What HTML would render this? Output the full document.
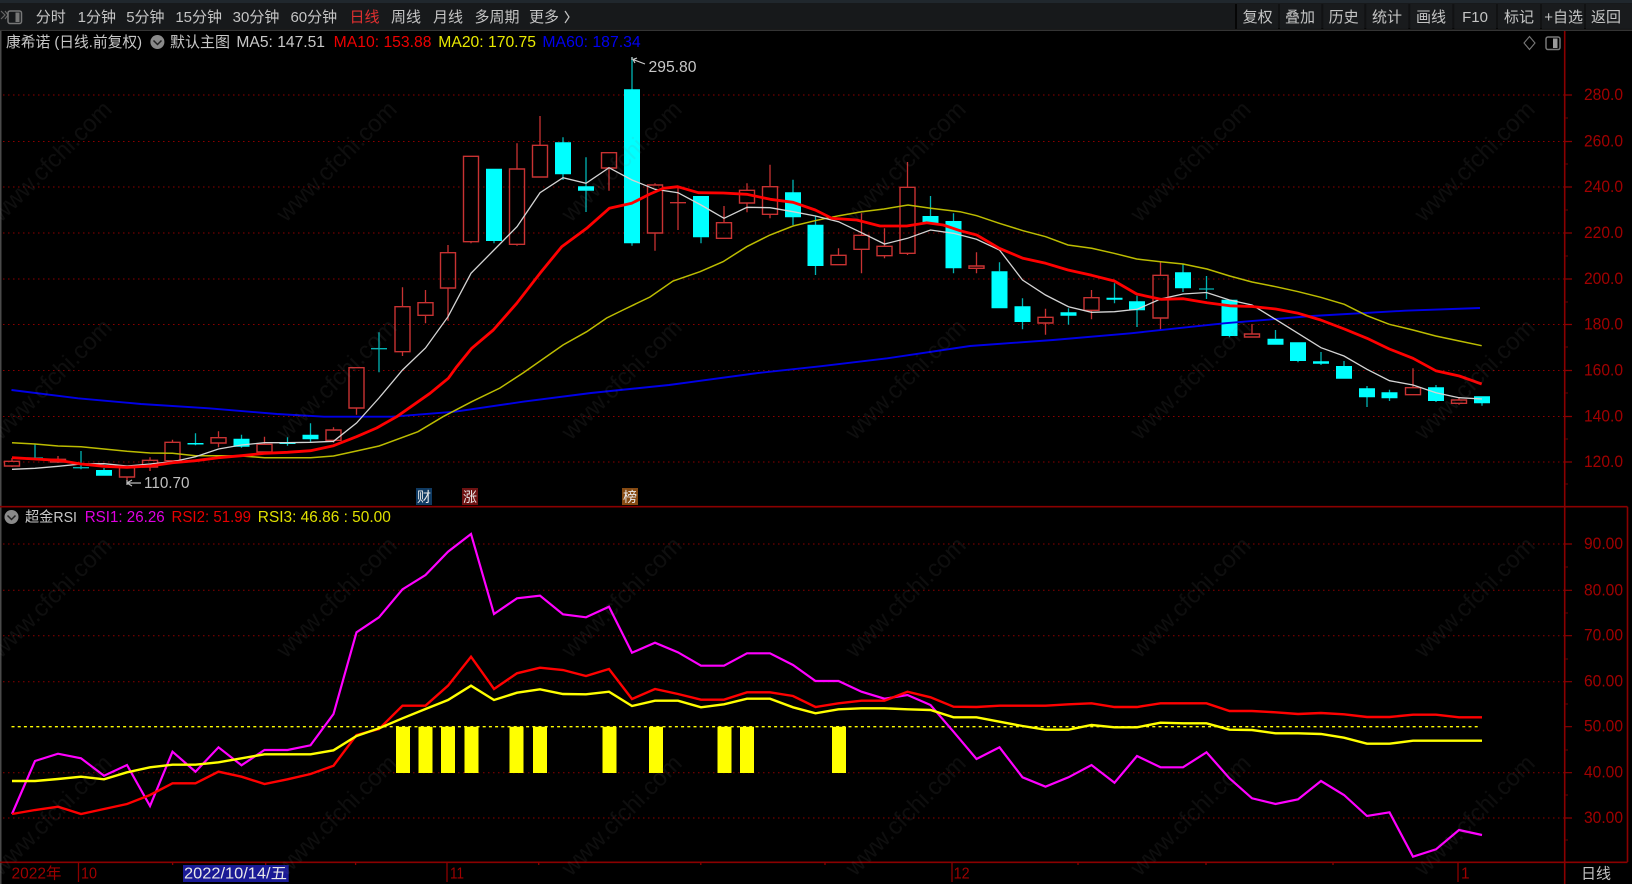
<!DOCTYPE html>
<html lang="zh"><head><meta charset="utf-8"><title>康希诺 日线</title>
<style>
html,body{margin:0;padding:0;background:#000;width:1632px;height:884px;overflow:hidden}
svg{display:block}
text{font-family:"Liberation Sans","Noto Sans CJK SC",sans-serif;font-size:15.5px}
.tb{font-size:15px;fill:#c4c4c4;text-anchor:middle}
.ax{fill:#a00000;font-size:17px}
.wm{font-size:24px;fill:#808080;opacity:.11}
</style></head><body>
<svg width="1632" height="884" viewBox="0 0 1632 884" xmlns="http://www.w3.org/2000/svg">
<rect width="1632" height="884" fill="#000"/>
<!-- toolbar -->
<rect width="1632" height="3" fill="#20272d"/>
<rect y="3" width="1632" height="26" fill="#17191b"/>
<rect y="29.5" width="1632" height="1.5" fill="#343434"/>
<rect x="0" width="1.5" height="884" y="31" fill="#4a4a4a"/>
<path d="M1 11l4 4-4 4M5 11l3 4-3 4" fill="none" stroke="#666" stroke-width="1.2"/>
<rect x="8" y="11" width="13.5" height="12.5" rx="2" fill="none" stroke="#777" stroke-width="1.5"/>
<rect x="15.5" y="12.5" width="4" height="9.5" fill="#777"/>
<text class="tb" x="50.7" y="22">分时</text>
<text class="tb" x="96.8" y="22">1分钟</text>
<text class="tb" x="145.4" y="22">5分钟</text>
<text class="tb" x="198.7" y="22">15分钟</text>
<text class="tb" x="256" y="22">30分钟</text>
<text class="tb" x="313.8" y="22">60分钟</text>
<text class="tb" x="364.5" y="22" style="fill:#e03030">日线</text>
<text class="tb" x="406" y="22">周线</text>
<text class="tb" x="448" y="22">月线</text>
<text class="tb" x="497" y="22">多周期</text>
<text class="tb" x="544" y="22">更多</text>
<path d="M565 11l4 6-4 6" fill="none" stroke="#c4c4c4" stroke-width="1.2"/>
<path d="M1236 4v25M1279 4v25M1322.3 4v25M1365.3 4v25M1409.3 4v25M1453.3 4v25M1497 4v25M1541 4v25M1585 4v25" stroke="#060606" stroke-width="2"/>
<rect x="1237" y="4" width="395" height="24" fill="#1b1d1f" opacity=".5"/>
<text class="tb" x="1257.6" y="22">复权</text>
<text class="tb" x="1300" y="22">叠加</text>
<text class="tb" x="1343.6" y="22">历史</text>
<text class="tb" x="1387" y="22">统计</text>
<text class="tb" x="1431" y="22">画线</text>
<text class="tb" x="1475" y="22">F10</text>
<text class="tb" x="1519" y="22">标记</text>
<text class="tb" x="1563.6" y="22">+自选</text>
<text class="tb" x="1606" y="22">返回</text>
<!-- title -->
<text x="6" y="47" fill="#c8c8c8" style="font-size:15px" textLength="136" lengthAdjust="spacingAndGlyphs">康希诺 (日线.前复权)</text>
<circle cx="157.4" cy="42" r="7" fill="#8a8a8a"/><path d="M153.5 40.5l4 4 4-4" fill="none" stroke="#222" stroke-width="1.5"/>
<text x="170" y="47" fill="#c8c8c8" style="font-size:15px">默认主图</text>
<text x="236.4" y="47" fill="#c8c8c8" textLength="88.6" lengthAdjust="spacingAndGlyphs">MA5: 147.51</text>
<text x="333.7" y="47" fill="#ee0000" textLength="97.8" lengthAdjust="spacingAndGlyphs">MA10: 153.88</text>
<text x="438.3" y="47" fill="#e8e800" textLength="97.7" lengthAdjust="spacingAndGlyphs">MA20: 170.75</text>
<text x="542.4" y="47" fill="#0000f0" textLength="98.3" lengthAdjust="spacingAndGlyphs">MA60: 187.34</text>
<path d="M1529.5 36.5l5.5 6.5-5.5 6.5-5.5-6.5z" fill="none" stroke="#777" stroke-width="1.1"/>
<rect x="1546" y="37" width="14" height="12.5" rx="2" fill="none" stroke="#777" stroke-width="1.5"/>
<rect x="1553" y="38.5" width="4.5" height="9.5" fill="#999"/>
<!-- grid -->
<path d="M3 95H1564M3 141.5H1564M3 187H1564M3 233H1564M3 279H1564M3 324.5H1564M3 370.5H1564M3 416.5H1564M3 462H1564M3 544H1564M3 590.3H1564M3 635.7H1564M3 681.7H1564M3 772.7H1564M3 818H1564" stroke="#8c0000" stroke-width="1" stroke-dasharray="1.5 3.5"/>
<!-- axes -->
<path d="M0 506.7H1627.5M1627.5 506.7V862M0 862.3H1627.5M1564.7 31V884" stroke="#8a0000" stroke-width="1.6" fill="none"/>
<path d="M1565 95h7M1565 141.5h7M1565 187h7M1565 233h7M1565 279h7M1565 324.5h7M1565 370.5h7M1565 416.5h7M1565 462h7M1565 544h7M1565 590.3h7M1565 635.7h7M1565 681.7h7M1565 726.7h7M1565 772.7h7M1565 818h7" stroke="#8a0000" stroke-width="1.2"/>
<path d="M1565 118h3M1565 164h3M1565 210h3M1565 256h3M1565 302h3M1565 347h3M1565 393h3M1565 439h3M1565 484h3M1565 567h3M1565 613h3M1565 659h3M1565 704h3M1565 750h3M1565 795h3M1565 840h3" stroke="#6a0000"/>
<text class="ax" x="1584" y="100" textLength="39" lengthAdjust="spacingAndGlyphs">280.0</text>
<text class="ax" x="1584" y="146.5" textLength="39" lengthAdjust="spacingAndGlyphs">260.0</text>
<text class="ax" x="1584" y="192" textLength="39" lengthAdjust="spacingAndGlyphs">240.0</text>
<text class="ax" x="1584" y="238" textLength="39" lengthAdjust="spacingAndGlyphs">220.0</text>
<text class="ax" x="1584" y="284" textLength="39" lengthAdjust="spacingAndGlyphs">200.0</text>
<text class="ax" x="1584" y="329.5" textLength="39" lengthAdjust="spacingAndGlyphs">180.0</text>
<text class="ax" x="1584" y="375.5" textLength="39" lengthAdjust="spacingAndGlyphs">160.0</text>
<text class="ax" x="1584" y="421.5" textLength="39" lengthAdjust="spacingAndGlyphs">140.0</text>
<text class="ax" x="1584" y="467" textLength="39" lengthAdjust="spacingAndGlyphs">120.0</text>
<text class="ax" x="1584" y="549" textLength="39" lengthAdjust="spacingAndGlyphs">90.00</text>
<text class="ax" x="1584" y="595.3" textLength="39" lengthAdjust="spacingAndGlyphs">80.00</text>
<text class="ax" x="1584" y="640.5" textLength="39" lengthAdjust="spacingAndGlyphs">70.00</text>
<text class="ax" x="1584" y="686.5" textLength="39" lengthAdjust="spacingAndGlyphs">60.00</text>
<text class="ax" x="1584" y="731.5" textLength="39" lengthAdjust="spacingAndGlyphs">50.00</text>
<text class="ax" x="1584" y="777.5" textLength="39" lengthAdjust="spacingAndGlyphs">40.00</text>
<text class="ax" x="1584" y="823" textLength="39" lengthAdjust="spacingAndGlyphs">30.00</text>
<!-- red wicks -->
<path fill="none" stroke="#c83232" stroke-width="1.3" d="M12 458V461.3M12 466V467M58 456V459.3M58 462V463M127 477V480.7M150 457.3V460.3M150 467V471M172.5 439.7V442.3M172.5 460.7V462M218.5 431.3V437.7M218.5 443V447.3M264.5 436.7V444.3M333.5 427.3V430M333.5 440.3V442.7M356.5 408V414.7M402.5 287.3V306.7M402.5 351.7V356M425.5 290V302.7M425.5 315.3V323.3M448 245V252.7M448 288V320.7M471 241.7V243.3M517 143.3V169M517 244.3V245.7M540 116V145.3M609 168V190.7M655 183.3V185M655 233V250.7M678 188V230M670 202.7H686M724 206V222.7M747 183.3V190.3M747 203V212.3M770 164.7V186.7M770 214.3V218.3M838.5 248.3V255.3M861.5 213.3V235.3M861.5 249.3V273.3M884.5 228.3V246.3M884.5 255.7V258.3M907.5 162V187.3M907.5 253.3V255M976.5 252.3V266M976.5 268.3V273.3M1045.5 308.7V317.3M1045.5 323V334.7M1091.5 290V297.7M1091.5 310.3V319.3M1160.5 261.7V275.3M1160.5 318V330M1252 324V334M1413 368.3V387.7M1459 398V400M1459 403.3V404.7"/>
<!-- red bodies -->
<path fill="none" stroke="#c83232" stroke-width="1.4" d="M4.5 461.3H19.5V466H4.5ZM50.5 459.3H65.5V462H50.5ZM119.5 467.7H134.5V477H119.5ZM142.5 460.3H157.5V467H142.5ZM165 442.3H180V460.7H165ZM211 437.7H226V443H211ZM257 444.3H272V452H257ZM326 430H341V440.3H326ZM349 367.7H364V408H349ZM395 306.7H410V351.7H395ZM418 302.7H433V315.3H418ZM440.5 252.7H455.5V288H440.5ZM463.5 156.3H478.5V241.7H463.5ZM509.5 169H524.5V244.3H509.5ZM532.5 145.3H547.5V177H532.5ZM601.5 152.7H616.5V168H601.5ZM647.5 185H662.5V233H647.5ZM716.5 222.7H731.5V238.3H716.5ZM739.5 190.3H754.5V203H739.5ZM762.5 186.7H777.5V214.3H762.5ZM831 255.3H846V264.7H831ZM854 235.3H869V249.3H854ZM877 246.3H892V255.7H877ZM900 187.3H915V253.3H900ZM969 266H984V268.3H969ZM1038 317.3H1053V323H1038ZM1084 297.7H1099V310.3H1084ZM1153 275.3H1168V318H1153ZM1244.5 334H1259.5V337H1244.5ZM1405.5 387.7H1420.5V394.7H1405.5ZM1451.5 400H1466.5V403.3H1451.5Z"/>
<!-- cyan wicks -->
<path fill="none" stroke="#00b4b4" stroke-width="1.3" d="M35 444V459M27 458H43M81 451V469.3M73 467.7H89M104 468V470M195.5 433.3V445.3M241.5 434.7V447.7M287.5 437.3V445.7M310.5 423.3V442.7M379 332.3V372.3M371 348.7H387M494 241V243.3M563 137.3V180M586 157.3V212M632 57.3V245.7M701 237.3V243.3M793 179.7V225M815.5 216V275M930.5 196V216M953.5 213.3V273.3M999.5 262.3V271.3M1022.5 298.3V329.3M1068.5 308.3V324.7M1114.5 283.3V303.3M1137 295.7V327M1183 264.3V292M1206.5 276V299M1199 289H1214M1229.5 336V337.3M1275.5 330V338.7M1298 361V362.3M1321 352V365M1344 361V366M1367 386V407M1389.5 389.7V401M1436 385V402M1482 403V405.7"/>
<!-- cyan bodies -->
<path fill="#00ffff" d="M96 470H112V475.7H96ZM187.5 443H203.5V444.5H187.5ZM233.5 438.7H249.5V446.7H233.5ZM279.5 442H295.5V444H279.5ZM302.5 434.7H318.5V439.3H302.5ZM486 168.7H502V241H486ZM555 142.3H571V174.3H555ZM578 186.3H594V190.7H578ZM624 89.3H640V243.3H624ZM693 196H709V237.3H693ZM785 192.3H801V217.3H785ZM807.5 224.7H823.5V266H807.5ZM922.5 216H938.5V223.3H922.5ZM945.5 221H961.5V268.3H945.5ZM991.5 271.3H1007.5V308.3H991.5ZM1014.5 306.3H1030.5V322H1014.5ZM1060.5 312.3H1076.5V315.7H1060.5ZM1106.5 297.7H1122.5V299.7H1106.5ZM1129 301.3H1145V310.3H1129ZM1175 272.3H1191V288.3H1175ZM1221.5 299.7H1237.5V336H1221.5ZM1267.5 338.7H1283.5V344.7H1267.5ZM1290 342.3H1306V361H1290ZM1313 361.3H1329V363.7H1313ZM1336 366H1352V378.7H1336ZM1359 388.3H1375V397.3H1359ZM1381.5 392.3H1397.5V398.3H1381.5ZM1428 387.3H1444V401H1428ZM1474 396.3H1490V403.3H1474Z"/>
<!-- MA60 -->
<polyline fill="none" stroke="#0000e6" stroke-width="1.9" points="11.5,390 78,398.3 141,404 209,408.3 277,414 324,416.7 392,416.7 455,411.7 523,401.7 591,393 669,385 758,373 820,366.3 887.3,358.3 970,346 1053,340 1130.7,333.3 1224,323.3 1312,316 1405,310.7 1480,308"/>
<!-- MA20 -->
<polyline fill="none" stroke="#bcbc00" stroke-width="1.5" points="12,442.7 35,444 58,446 81,446.7 104,449 127,451.3 150,453 172.5,453.3 195.5,455.7 218.5,455.7 241.5,456 264.5,457.7 287.5,457.7 310.5,457.7 333.5,456 356.5,451 379,446 418,431.7 443,416.7 471.7,401.7 500,388 523,373 563,345 586.7,331.7 606.7,318 623,310 650,297 673,281 700,271.7 723,261.7 746.7,246.7 770,235 793,226 815,220.7 839,215.7 861.7,211.7 884,209 908,205 930.7,208.3 960,211.7 976.7,215.7 999.3,223.3 1023,230.7 1045.7,236.7 1068,245 1091.7,248.3 1114,253.3 1136.7,259 1160.7,261.7 1183,264 1207,269 1229.7,276 1252,282 1275.7,286.7 1298.3,291.7 1320.7,297.3 1344.3,304.3 1367,315.7 1389.3,324.3 1413,330 1435.7,336 1459.3,341 1481.7,345.7"/>
<!-- MA5 -->
<polyline fill="none" stroke="#d4d4d4" stroke-width="1.3" points="12,469.3 35,468.3 58,466.3 81,464 104,463.7 127,466 150,464 172.5,461.7 195.5,456.7 218.5,449 241.5,445 264.5,442.7 287.5,442.7 310.5,442.3 333.5,441.3 356.5,423 379,398 402.5,370 425.5,348 448,316.7 471,273.3 494,250 517,226.7 540,192.7 563,177.7 586,183.3 609,167.7 632,180 655,189.3 678,192.7 701,205 724,218.3 747,207.3 770,207.7 793,211.7 815.5,216 838.5,221.7 861.5,232.7 884.5,244 907.5,238.3 930.5,230 953.5,233.3 976.5,239.3 999.5,250 1022.5,280 1045.5,295 1068.5,306.7 1091.5,312.3 1114.5,311.7 1137,309.3 1160.5,299 1183,294 1206.5,292.5 1229.5,300 1252,305 1275.5,319.3 1298,333.3 1321,347.7 1344,356 1367,369.3 1389.5,380.7 1413,385 1436,392.7 1459,397.7 1482,399"/>
<!-- MA10 -->
<polyline fill="none" stroke="#ff0000" stroke-width="2.8" stroke-linejoin="round" points="12,457.7 35,459 58,460.3 81,464 104,466.3 127,467.3 150,466 172.5,462.7 195.5,460.7 218.5,457.7 241.5,455.7 264.5,453.3 287.5,452.3 310.5,450.7 333.5,445.7 356.5,436.7 376.6,428 396.7,416.7 430,393.3 448.3,378.3 456.7,366.7 471.7,348.3 493.3,330 516.7,303.3 540,273.3 561.7,246.7 586.7,228.3 609.3,208.3 631.7,203.3 650,194 663.3,188.3 677.7,186.7 698.3,192.7 723.3,193 746.7,194.3 770.3,199.3 793,202.3 815.3,210 831.7,218.3 856.7,220 880,226 906.7,226 926.7,222.7 943.3,225 960,230.7 976.7,235 999.3,248.3 1023,258.3 1045.7,263.3 1068,270 1091.7,275.3 1114.3,281 1136.7,294 1160.7,299.3 1183.3,298.7 1207,302.7 1229.7,305.8 1252,306.5 1275.7,309 1298.3,313.3 1320.7,320 1344.3,329 1367,338.3 1389.3,349 1413,358.3 1435.7,370.7 1459.3,376 1481.7,384"/>
<!-- price labels -->
<path d="M645 64L633 59.5M633 59.5l4-1.5M633 59.5l2 3.5M632 57v3" fill="none" stroke="#ccc" stroke-width="1.2"/>
<text x="648.5" y="72" fill="#c8c8c8" textLength="48" lengthAdjust="spacingAndGlyphs">295.80</text>
<path d="M141 483H127M127 483l5-3M127 483l5 3M127 480v5" fill="none" stroke="#bbb" stroke-width="1.2"/>
<text x="144" y="488" fill="#c0c0c0" textLength="45.5" lengthAdjust="spacingAndGlyphs">110.70</text>
<!-- badges -->
<rect x="416" y="488" width="16" height="17" fill="#0f3a62"/><text x="417" y="502" fill="#e8e8e8" style="font-size:14px">财</text>
<rect x="462" y="488" width="16" height="17" fill="#6e1212"/><text x="463" y="502" fill="#e8e8e8" style="font-size:14px">涨</text>
<rect x="622" y="488" width="16" height="17" fill="#864a12"/><text x="623" y="502" fill="#e8e8e8" style="font-size:14px">榜</text>
<!-- RSI title -->
<circle cx="11.5" cy="517" r="7" fill="#8a8a8a"/><path d="M7.5 515.5l4 4 4-4" fill="none" stroke="#222" stroke-width="1.5"/>
<text x="25" y="522" fill="#c8c8c8" style="font-size:14.5px" textLength="52" lengthAdjust="spacingAndGlyphs">超金RSI</text>
<text x="84.7" y="522" fill="#e000e0" textLength="80" lengthAdjust="spacingAndGlyphs">RSI1: 26.26</text>
<text x="171.5" y="522" fill="#e80000" textLength="79.5" lengthAdjust="spacingAndGlyphs">RSI2: 51.99</text>
<text x="257.8" y="522" fill="#e0e000" textLength="133" lengthAdjust="spacingAndGlyphs">RSI3: 46.86 : 50.00</text>
<!-- RSI bars -->
<path fill="#ffff00" d="M396 726.7h14V773h-14zM418.5 726.7h14V773h-14zM441 726.7h14V773h-14zM464.5 726.7h14V773h-14zM509.5 726.7h14V773h-14zM533 726.7h14V773h-14zM602.5 726.7h14V773h-14zM649 726.7h14V773h-14zM717.5 726.7h14V773h-14zM740 726.7h14V773h-14zM832 726.7h14V773h-14z"/>
<path d="M11.5 726.7H1478" stroke="#ffff00" stroke-width="1.3" stroke-dasharray="3 3.2"/>
<!-- RSI lines -->
<polyline fill="none" stroke="#ff00ff" stroke-width="2.2" points="12,814 35,761 58,753.7 81,758.3 104,775.7 127,765 150,806 172.5,751.7 195.5,771.7 218.5,747.3 241.5,765.3 264.5,750 287.5,750 310.5,745.3 333.5,714 356.5,632.3 379,617.3 402.5,589.3 425.5,575 448,551.7 471,534 494,614 517,598.3 540,595.7 563,614.3 586,617.3 609,606.7 632,652.7 655,642.7 678,652.3 701,665.7 724,665.7 747,653.3 770,653.3 793,665 815.5,681 838.5,681 861.5,691.7 884.5,698.7 907.5,695 930.5,705 953.5,731.7 976.5,759 999.5,747.3 1022.5,777.3 1045.5,786.7 1068.5,777.3 1091.5,765 1114.5,782.7 1137,756 1160.5,767.3 1183,767.3 1206.5,752.3 1229.5,778.3 1252,798.3 1275.5,804 1298,799.3 1321,781 1344,795 1367,816 1389.5,812.3 1413,856.7 1436,849.3 1459,830 1482,835"/>
<polyline fill="none" stroke="#ff0000" stroke-width="2.4" points="12,814 35,810 58,806.7 81,814 104,809 127,804 150,795 172.5,783.3 195.5,783.3 218.5,771.7 241.5,776.7 264.5,784 287.5,779.3 310.5,774 333.5,765.7 356.5,735 379,729 402.5,705.7 425.5,705.7 448,685.7 471,656.7 494,689 517,673.3 540,667.7 563,670 586,676 609,669 632,699 655,689 678,694 701,699.7 724,699.7 747,692.3 770,692.3 793,696 815.5,707 838.5,703.3 861.5,700.7 884.5,700.7 907.5,691.7 930.5,697.3 953.5,706.7 976.5,707 999.5,705.7 1022.5,705.7 1045.5,705.7 1068.5,704.3 1091.5,703.3 1114.5,707 1137,707 1160.5,703.3 1183,703.3 1206.5,703.3 1229.5,711 1252,711 1275.5,712.3 1298,714 1321,713 1344,714.3 1367,717 1389.5,717 1413,714.7 1436,714.7 1459,717.3 1482,717.3"/>
<polyline fill="none" stroke="#ffff00" stroke-width="2.4" points="12,781 35,781 58,779 81,776.7 104,779.3 127,772.3 150,767.3 172.5,764.7 195.5,764.7 218.5,762.3 241.5,758.3 264.5,754.3 287.5,754.3 310.5,754.3 333.5,750.3 356.5,736 379,728.3 402.5,718.3 425.5,709 448,700 471,685.7 494,700 517,692.7 540,689.3 563,694 586,694.3 609,691.7 632,706 655,700.7 678,700.7 701,707.3 724,704.3 747,698.7 770,698.7 793,707.3 815.5,713.3 838.5,709.3 861.5,708.3 884.5,708.3 907.5,709.3 930.5,710 953.5,717.3 976.5,717.3 999.5,721.7 1022.5,726 1045.5,729.7 1068.5,729.7 1091.5,725 1114.5,727.3 1137,727.3 1160.5,722.7 1183,723.3 1206.5,723.3 1229.5,729.7 1252,730 1275.5,733.3 1298,733.3 1321,734 1344,737.7 1367,743.7 1389.5,743.7 1413,740.7 1436,740.7 1459,740.7 1482,740.7"/>
<!-- bottom axis -->
<path d="M78.5 862v20M447 862v20M952 862v20M1458 862v20" stroke="#8a0000" stroke-width="1.3"/>
<path d="M172.6 862v3M265.7 862v3M355.6 862v3M538.7 862v3M700.8 862v3M825 862v3M1078 862v3M1206 862v3M1333 862v3" stroke="#8a0000" stroke-width="1.3"/>
<text x="11.5" y="878.5" fill="#a00000" style="font-size:15.5px">2022年</text>
<text x="81" y="878.5" fill="#a00000" textLength="16" lengthAdjust="spacingAndGlyphs">10</text>
<rect x="183" y="865" width="105.7" height="17" fill="#1a1a96"/>
<text x="184" y="878.5" fill="#e8e8e8" style="font-size:15.5px" textLength="103" lengthAdjust="spacingAndGlyphs">2022/10/14/五</text>
<text x="450" y="878.5" fill="#a00000" textLength="14" lengthAdjust="spacingAndGlyphs">11</text>
<text x="953.6" y="878.5" fill="#a00000" textLength="16" lengthAdjust="spacingAndGlyphs">12</text>
<text x="1461" y="878.5" fill="#a00000">1</text>
<text x="1581" y="878.5" fill="#c0c0c0" style="font-size:15px">日线</text>
<!-- watermark -->
<g>
<text class="wm" transform="translate(1 223) rotate(-45)">www.cfchi.com</text>
<text class="wm" transform="translate(286 223) rotate(-45)">www.cfchi.com</text>
<text class="wm" transform="translate(571 223) rotate(-45)">www.cfchi.com</text>
<text class="wm" transform="translate(855 223) rotate(-45)">www.cfchi.com</text>
<text class="wm" transform="translate(1140 223) rotate(-45)">www.cfchi.com</text>
<text class="wm" transform="translate(1424 223) rotate(-45)">www.cfchi.com</text>
<text class="wm" transform="translate(1 441) rotate(-45)">www.cfchi.com</text>
<text class="wm" transform="translate(286 441) rotate(-45)">www.cfchi.com</text>
<text class="wm" transform="translate(571 441) rotate(-45)">www.cfchi.com</text>
<text class="wm" transform="translate(855 441) rotate(-45)">www.cfchi.com</text>
<text class="wm" transform="translate(1140 441) rotate(-45)">www.cfchi.com</text>
<text class="wm" transform="translate(1424 441) rotate(-45)">www.cfchi.com</text>
<text class="wm" transform="translate(1 659) rotate(-45)">www.cfchi.com</text>
<text class="wm" transform="translate(286 659) rotate(-45)">www.cfchi.com</text>
<text class="wm" transform="translate(571 659) rotate(-45)">www.cfchi.com</text>
<text class="wm" transform="translate(855 659) rotate(-45)">www.cfchi.com</text>
<text class="wm" transform="translate(1140 659) rotate(-45)">www.cfchi.com</text>
<text class="wm" transform="translate(1424 659) rotate(-45)">www.cfchi.com</text>
<text class="wm" transform="translate(1 877) rotate(-45)">www.cfchi.com</text>
<text class="wm" transform="translate(286 877) rotate(-45)">www.cfchi.com</text>
<text class="wm" transform="translate(571 877) rotate(-45)">www.cfchi.com</text>
<text class="wm" transform="translate(855 877) rotate(-45)">www.cfchi.com</text>
<text class="wm" transform="translate(1140 877) rotate(-45)">www.cfchi.com</text>
<text class="wm" transform="translate(1424 877) rotate(-45)">www.cfchi.com</text>
</g>
</svg>
</body></html>
